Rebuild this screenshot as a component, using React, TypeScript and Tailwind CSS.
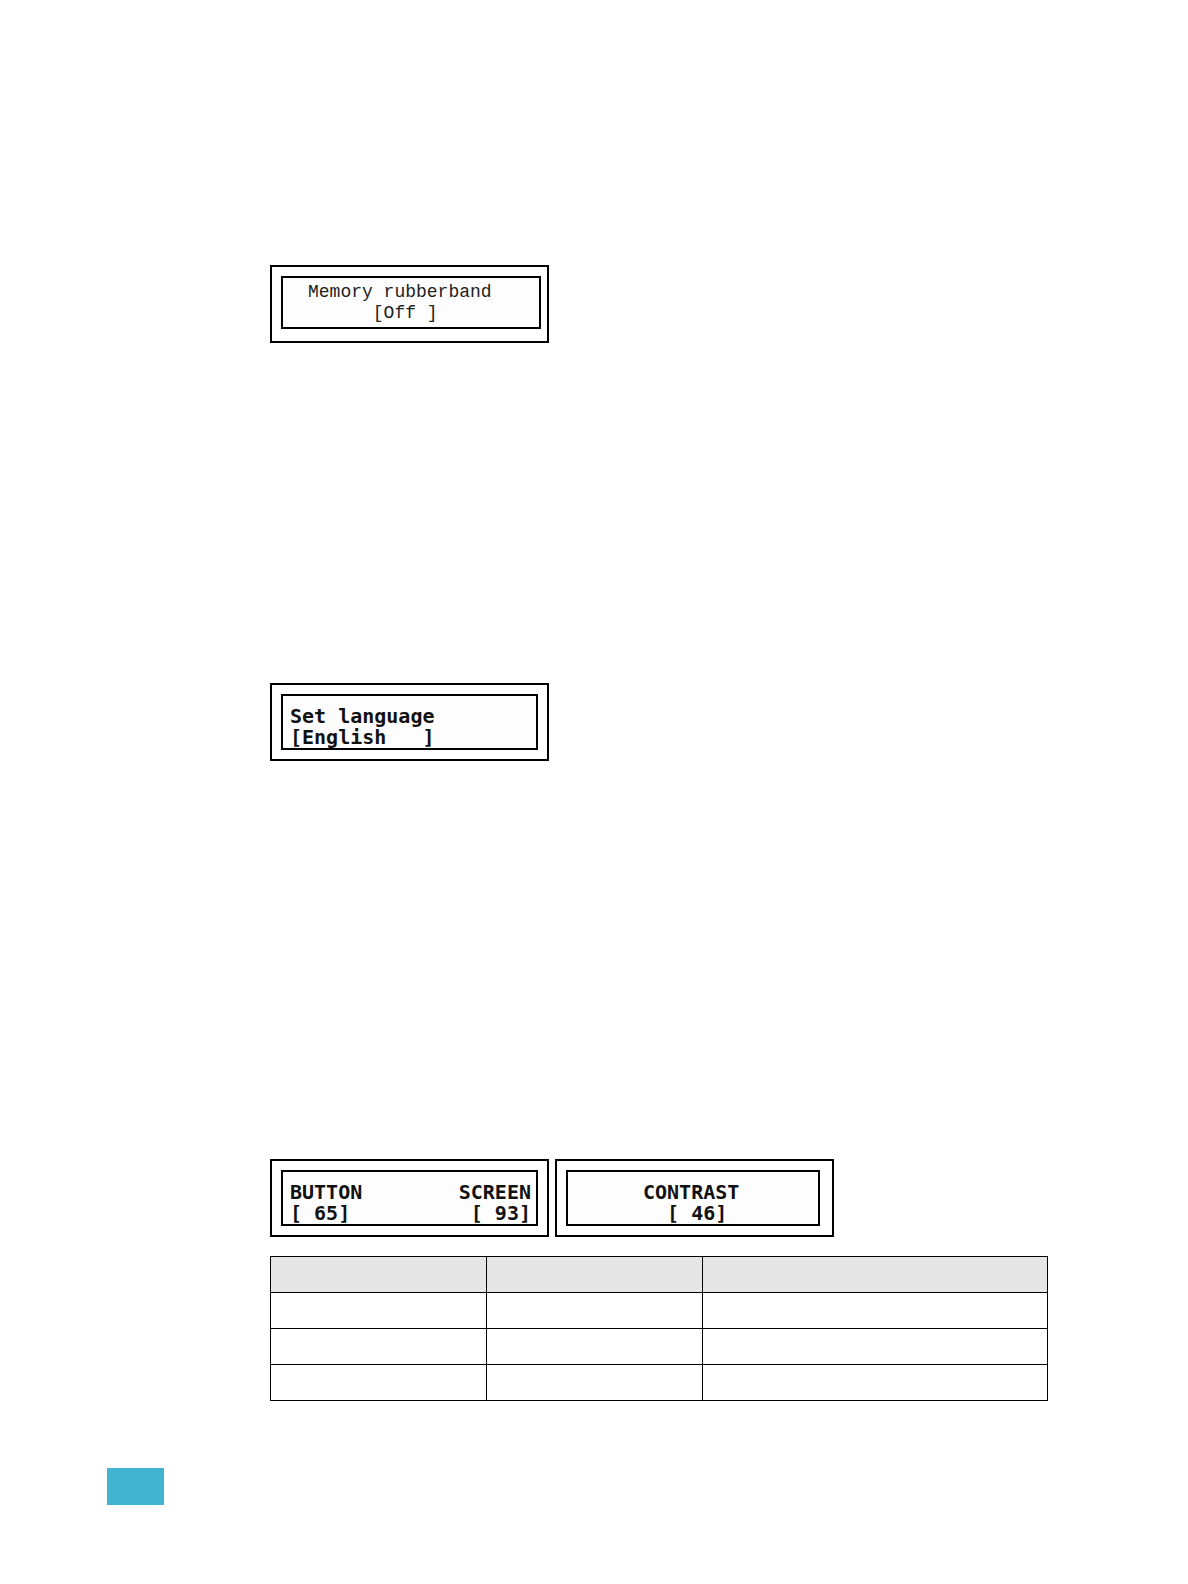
import type { ReactNode } from "react";

type DisplayProps = {
  label: string;
  frame: string;
  text: string;
  children: ReactNode;
};

// A two-line LCD readout inside a double frame.
function Display({ label, frame, text, children }: DisplayProps) {
  return (
    <figure
      aria-label={label}
      className={`w-[279px] border-2 border-black bg-white pt-[9px] pl-[9px] ${frame}`}
    >
      <div className={`overflow-hidden border-2 border-black bg-[#fdfdfd] leading-[21px] ${text}`}>
        {children}
      </div>
    </figure>
  );
}

const boldText =
  "pt-[10px] font-['DejaVu_Sans_Mono',monospace] text-[20px] font-bold text-[#111]";

const rows = [0, 1, 2];

export default function App() {
  return (
    <main className="min-h-screen bg-white pt-[265px] pb-[79px]">
      <div className="pr-[140px] pl-[270px]">
        <Display
          label="Memory rubberband"
          frame="pr-[6px] pb-[12px]"
          text="pt-1 pb-[3px] pl-[25px] font-['Liberation_Mono',monospace] text-[18px] text-[#222]"
        >
          <p className="whitespace-pre">Memory rubberband</p>
          <p className="whitespace-pre">{"      [Off ]"}</p>
        </Display>

        <div className="mt-[340px]">
          <Display label="Set language" frame="pr-[9px] pb-[9px]" text={`${boldText} pl-[7px]`}>
            <p className="whitespace-pre">Set language</p>
            <p className="whitespace-pre">{"[English   ]"}</p>
          </Display>
        </div>

        <div className="mt-[398px] flex flex-wrap gap-[6px]">
          <Display
            label="Button and screen brightness"
            frame="pr-[9px] pb-[9px]"
            text={`${boldText} pl-[7px]`}
          >
            <div className="flex justify-between pr-[5px]">
              <div>
                <p>BUTTON</p>
                <p className="whitespace-pre">[ 65]</p>
              </div>
              <div className="text-right">
                <p>SCREEN</p>
                <p className="whitespace-pre">[ 93]</p>
              </div>
            </div>
          </Display>
          <Display label="Contrast" frame="pr-[12px] pb-[9px]" text={`${boldText} pl-[75px]`}>
            <p className="whitespace-pre">CONTRAST</p>
            <p className="whitespace-pre">{"  [ 46]"}</p>
          </Display>
        </div>

        <table className="mt-[19px] w-full table-fixed border-separate border-spacing-0 border-t border-l border-black">
          <colgroup>
            <col className="w-[216px]" />
            <col className="w-[216px]" />
            <col />
          </colgroup>
          <thead>
            <tr className="h-9 bg-[#e6e6e6]">
              <th className="border-r border-b border-black" />
              <th className="border-r border-b border-black" />
              <th className="border-r border-b border-black" />
            </tr>
          </thead>
          <tbody>
            {rows.map((row) => (
              <tr key={row} className="h-9">
                <td className="border-r border-b border-black" />
                <td className="border-r border-b border-black" />
                <td className="border-r border-b border-black" />
              </tr>
            ))}
          </tbody>
        </table>
      </div>
      <footer className="mt-[67px] pl-[107px]">
        <div className="h-[37px] w-[57px] bg-[#40b4d0]" />
      </footer>
    </main>
  );
}
